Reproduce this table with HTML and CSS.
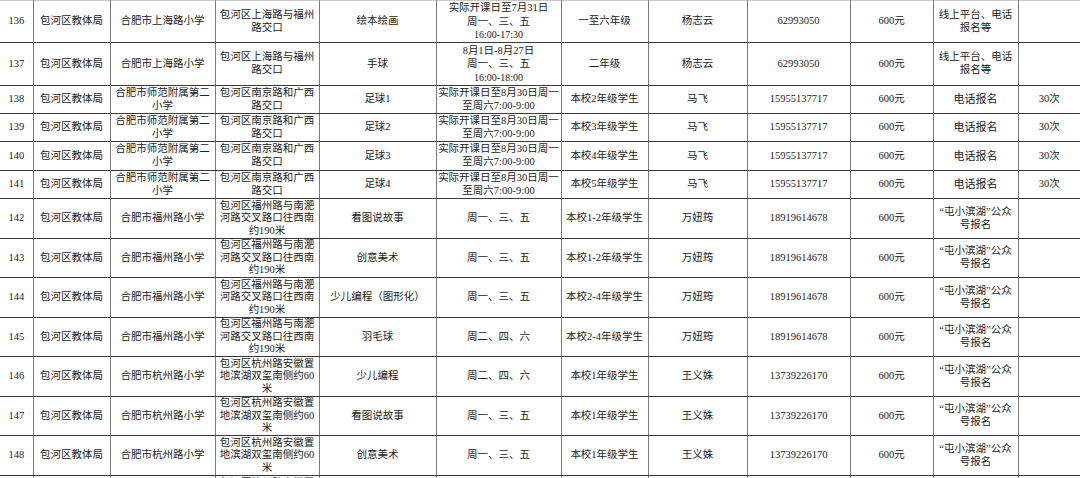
FILE: index.html
```html
<!DOCTYPE html>
<html lang="zh-CN">
<head>
<meta charset="utf-8">
<title>暑期课程表</title>
<link rel="stylesheet" href="styles.css">
</head>
<body>
<table class="sheet">
  <colgroup>
    <col class="c-no"><col class="c-dist"><col class="c-school"><col class="c-addr"><col class="c-course"><col class="c-time"><col class="c-grade"><col class="c-teacher"><col class="c-phone"><col class="c-fee"><col class="c-reg"><col class="c-count">
  </colgroup>
  <tbody>
    <tr class="rt">
      <td>136</td><td>包河区教体局</td><td>合肥市上海路小学</td><td>包河区上海路与福州<br>路交口</td><td>绘本绘画</td><td class="time">实际开课日至7月31日<br>周一、三、五<br><span class="sm">16:00-17:30</span></td><td>一至六年级</td><td>杨志云</td><td>62993050</td><td>600元</td><td>线上平台、电话<br>报名等</td><td></td>
    </tr>
    <tr class="rt b">
      <td>137</td><td>包河区教体局</td><td>合肥市上海路小学</td><td>包河区上海路与福州<br>路交口</td><td>手球</td><td class="time">8月1日-8月27日<br>周一、三、五<br><span class="sm">16:00-18:00</span></td><td>二年级</td><td>杨志云</td><td>62993050</td><td>600元</td><td>线上平台、电话<br>报名等</td><td></td>
    </tr>
    <tr class="r2">
      <td>138</td><td>包河区教体局</td><td>合肥市师范附属第二<br>小学</td><td>包河区南京路和广西<br>路交口</td><td>足球1</td><td>实际开课日至8月30日周一<br>至周六7:00-9:00</td><td>本校2年级学生</td><td>马飞</td><td>15955137717</td><td>600元</td><td class="big">电话报名</td><td>30次</td>
    </tr>
    <tr class="r2">
      <td>139</td><td>包河区教体局</td><td>合肥市师范附属第二<br>小学</td><td>包河区南京路和广西<br>路交口</td><td>足球2</td><td>实际开课日至8月30日周一<br>至周六7:00-9:00</td><td>本校3年级学生</td><td>马飞</td><td>15955137717</td><td>600元</td><td class="big">电话报名</td><td>30次</td>
    </tr>
    <tr class="r2 b">
      <td>140</td><td>包河区教体局</td><td>合肥市师范附属第二<br>小学</td><td>包河区南京路和广西<br>路交口</td><td>足球3</td><td>实际开课日至8月30日周一<br>至周六7:00-9:00</td><td>本校4年级学生</td><td>马飞</td><td>15955137717</td><td>600元</td><td class="big">电话报名</td><td>30次</td>
    </tr>
    <tr class="r2">
      <td>141</td><td>包河区教体局</td><td>合肥市师范附属第二<br>小学</td><td>包河区南京路和广西<br>路交口</td><td>足球4</td><td>实际开课日至8月30日周一<br>至周六7:00-9:00</td><td>本校5年级学生</td><td>马飞</td><td>15955137717</td><td>600元</td><td class="big">电话报名</td><td>30次</td>
    </tr>
    <tr class="r3">
      <td>142</td><td>包河区教体局</td><td>合肥市福州路小学</td><td>包河区福州路与南淝<br>河路交叉路口往西南<br>约190米</td><td>看图说故事</td><td>周一、三、五</td><td>本校1-2年级学生</td><td>万妞筠</td><td>18919614678</td><td>600元</td><td>“屯小滨湖”公众<br>号报名</td><td></td>
    </tr>
    <tr class="r3s">
      <td>143</td><td>包河区教体局</td><td>合肥市福州路小学</td><td>包河区福州路与南淝<br>河路交叉路口往西南<br>约190米</td><td>创意美术</td><td>周一、三、五</td><td>本校1-2年级学生</td><td>万妞筠</td><td>18919614678</td><td>600元</td><td>“屯小滨湖”公众<br>号报名</td><td></td>
    </tr>
    <tr class="r3">
      <td>144</td><td>包河区教体局</td><td>合肥市福州路小学</td><td>包河区福州路与南淝<br>河路交叉路口往西南<br>约190米</td><td>少儿编程（图形化）</td><td>周一、三、五</td><td>本校2-4年级学生</td><td>万妞筠</td><td>18919614678</td><td>600元</td><td>“屯小滨湖”公众<br>号报名</td><td></td>
    </tr>
    <tr class="r3s">
      <td>145</td><td>包河区教体局</td><td>合肥市福州路小学</td><td>包河区福州路与南淝<br>河路交叉路口往西南<br>约190米</td><td>羽毛球</td><td>周二、四、六</td><td>本校2-4年级学生</td><td>万妞筠</td><td>18919614678</td><td>600元</td><td>“屯小滨湖”公众<br>号报名</td><td></td>
    </tr>
    <tr class="r3">
      <td>146</td><td>包河区教体局</td><td>合肥市杭州路小学</td><td>包河区杭州路安徽置<br>地滨湖双玺南侧约60<br>米</td><td>少儿编程</td><td>周二、四、六</td><td>本校1年级学生</td><td>王义姝</td><td>13739226170</td><td>600元</td><td>“屯小滨湖”公众<br>号报名</td><td></td>
    </tr>
    <tr class="r3s">
      <td>147</td><td>包河区教体局</td><td>合肥市杭州路小学</td><td>包河区杭州路安徽置<br>地滨湖双玺南侧约60<br>米</td><td>看图说故事</td><td>周一、三、五</td><td>本校1年级学生</td><td>王义姝</td><td>13739226170</td><td>600元</td><td>“屯小滨湖”公众<br>号报名</td><td></td>
    </tr>
    <tr class="r3">
      <td>148</td><td>包河区教体局</td><td>合肥市杭州路小学</td><td>包河区杭州路安徽置<br>地滨湖双玺南侧约60<br>米</td><td>创意美术</td><td>周一、三、五</td><td>本校1年级学生</td><td>王义姝</td><td>13739226170</td><td>600元</td><td>“屯小滨湖”公众<br>号报名</td><td></td>
    </tr>
    <tr class="r3">
      <td>149</td><td>包河区教体局</td><td>合肥市杭州路小学</td><td>包河区杭州路安徽置<br>地滨湖双玺南侧约60<br>米</td><td>羽毛球</td><td>周二、四、六</td><td>本校1年级学生</td><td>王义姝</td><td>13739226170</td><td>600元</td><td>“屯小滨湖”公众<br>号报名</td><td></td>
    </tr>
  </tbody>
</table>
</body>
</html>
```
FILE: styles.css
```css
html, body {
  margin: 0;
  padding: 0;
  background: #ffffff;
  overflow: hidden;
}

.sheet {
  table-layout: fixed;
  border-collapse: collapse;
  width: 1080px;
  font-family: "Liberation Serif", "Noto Sans CJK SC", serif;
  font-size: 10.5px;
  line-height: 12.6px;
  color: #222222;
}

.c-no { width: 33px; }
.c-dist { width: 77px; }
.c-school { width: 105px; }
.c-addr { width: 104px; }
.c-course { width: 117px; }
.c-time { width: 125px; }
.c-grade { width: 87px; }
.c-teacher { width: 99px; }
.c-phone { width: 103px; }
.c-fee { width: 83px; }
.c-reg { width: 85px; }
.c-count { width: 62px; }

.sheet td {
  padding: 0 1px;
  text-align: center;
  vertical-align: middle;
  white-space: nowrap;
  overflow: hidden;
  border-top: 1px solid #3a3a3a;
  border-bottom: 1px solid #3a3a3a;
  border-left: 1px solid #7a7a7a;
  border-right: 1px solid #7a7a7a;
}

.sheet tr:first-child td {
  border-top-color: #c8c8c8;
}

.sheet td:first-child { border-left: none; }
.sheet td:last-child { border-right: none; }

.rt td { height: 41px; }
.rt.b td { height: 42px; }
.r2 td { height: 27px; }
.r2.b td { height: 28px; }
.r3 td { height: 39px; }
.r3s td { height: 38px; }

.time { line-height: 13.5px; }
.sm { font-size: 10px; }
.big { font-size: 11px; }
```
